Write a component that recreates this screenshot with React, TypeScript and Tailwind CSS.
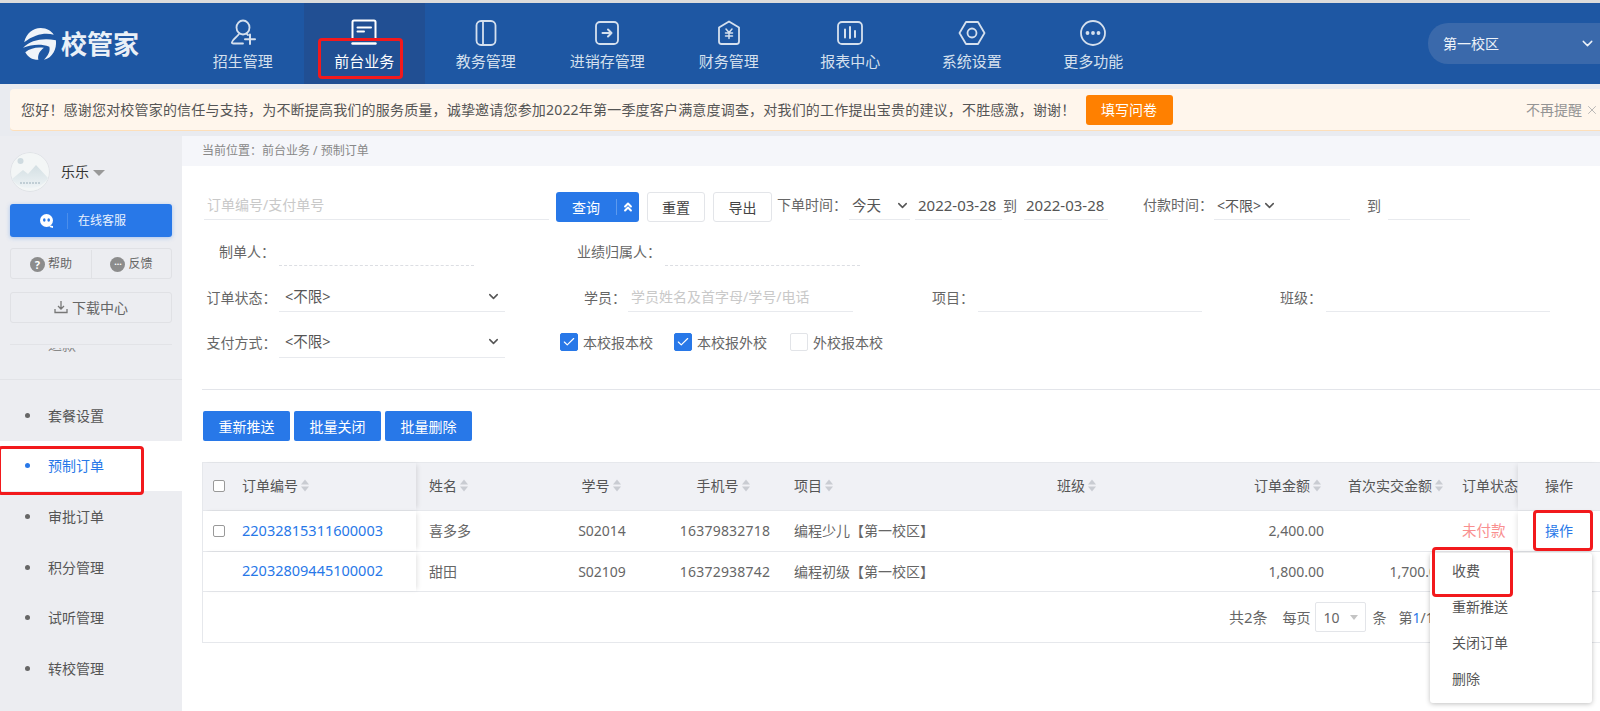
import { ChevronDown, ChevronsUp, Check, X } from "lucide-react"
import type { ReactNode } from "react"

const navItems = [
  { label: "招生管理", icon: "user" },
  { label: "前台业务", icon: "desk", active: true },
  { label: "教务管理", icon: "book" },
  { label: "进销存管理", icon: "stock" },
  { label: "财务管理", icon: "money" },
  { label: "报表中心", icon: "chart" },
  { label: "系统设置", icon: "gear" },
  { label: "更多功能", icon: "more" },
]

const menuItems = ["套餐设置", "预制订单", "审批订单", "积分管理", "试听管理", "转校管理"]

const orders = [
  { no: "22032815311600003", name: "喜多多", sno: "S02014", phone: "16379832718", item: "编程少儿【第一校区】", amount: "2,400.00", first: "", status: "未付款", checkbox: true },
  { no: "22032809445100002", name: "甜田", sno: "S02109", phone: "16372938742", item: "编程初级【第一校区】", amount: "1,800.00", first: "1,700.00", status: "", checkbox: false },
]

function NavIcon({ name }: { name: string }) {
  const common = { width: 28, height: 28, viewBox: "0 0 28 28", fill: "none", stroke: "#d5e0ee", strokeWidth: 1.8, strokeLinecap: "round" as const, strokeLinejoin: "round" as const }
  if (name === "user")
    return (
      <svg {...common}>
        <ellipse cx="14" cy="8.500" rx="6.500" ry="7" />
        <path d="M10 15c-2 3-6 5-7 8-.4 1 .2 1.500 1.500 1.500H14" />
        <path d="M17.500 14.500l1.500 1.500" />
        <path d="M21 15.500v9.500M16 20.200h10" strokeWidth="2" />
      </svg>
    )
  if (name === "desk")
    return (
      <svg {...common} stroke="#ffffff" strokeWidth="2">
        <path d="M2.500 21V3c0-.8.700-1.500 1.500-1.500h20c.8 0 1.500.7 1.500 1.500v18" />
        <path d="M7.500 8.500h13.500M7.500 12.500h6.500" />
        <path d="M2.500 24.500h23" strokeWidth="2.400" />
      </svg>
    )
  if (name === "book")
    return (
      <svg {...common}>
        <rect x="4.500" y="2" width="19" height="24" rx="4.500" />
        <path d="M11 2v24" />
      </svg>
    )
  if (name === "stock")
    return (
      <svg {...common}>
        <rect x="3" y="3" width="22" height="22" rx="4" />
        <path d="M9.500 14h9M15 10.500l3.500 3.500-3.500 3.500" strokeWidth="2" />
      </svg>
    )
  if (name === "money")
    return (
      <svg {...common}>
        <path d="M14 2.500l10 6v14a2.500 2.500 0 0 1-2.500 2.500h-15A2.500 2.500 0 0 1 4 22.500v-14z" />
        <path d="M11 10l3 3.500 3-3.500M10.500 14h7M10.500 17h7M14 13.500v6" strokeWidth="1.500" />
      </svg>
    )
  if (name === "chart")
    return (
      <svg {...common}>
        <rect x="2" y="3" width="24" height="22" rx="4" />
        <path d="M9 10.500v8M14 8v11M19 12v6" strokeWidth="2" />
      </svg>
    )
  if (name === "gear")
    return (
      <svg {...common}>
        <path d="M8 3h12l6.500 11L20 25H8L1.500 14z" />
        <circle cx="14" cy="14" r="4.500" />
      </svg>
    )
  return (
    <svg {...common}>
      <circle cx="14" cy="14" r="12" />
      <circle cx="8.500" cy="14" r="1" fill="#d5e0ee" />
      <circle cx="14" cy="14" r="1" fill="#d5e0ee" />
      <circle cx="19.500" cy="14" r="1" fill="#d5e0ee" />
    </svg>
  )
}

function Logo() {
  return (
    <div className="flex w-[182px] shrink-0 items-center pt-[1px] pl-[22px]">
      <svg width="35" height="35" viewBox="0 0 32 32" fill="#f0f4f9">
        <path d="M2 14C4 6 10 1 17 1c6 0 10 3 12 6C22 5 12 6 2 14z" />
        <path d="M1 19c7-7 17-9 30-7 1 8-3 16-11 18 4-4 6-8 5-12-8-3-16-2-24 1z" />
        <path d="M3 23c5-4 11-5 17-4-4 3-6 7-5 11-6 0-10-3-12-7z" />
      </svg>
      <span className="ml-[4px] text-[26px] leading-none font-bold text-[#eaf0f7]">校管家</span>
    </div>
  )
}

function Header() {
  return (
    <header className="flex h-[81px] shrink-0 bg-[#1e57a3]">
      <Logo />
      <nav className="flex">
        {navItems.map((item) => (
          <div
            key={item.label}
            className={`flex w-[121.5px] flex-col items-center pt-[16px] ${item.active ? "bg-[#214f93]" : ""}`}
          >
            <NavIcon name={item.icon} />
            <span className={`mt-[4px] text-[15px] leading-[20px] whitespace-nowrap ${item.active ? "text-white" : "text-[#d5e0ee]"}`}>
              {item.label}
            </span>
          </div>
        ))}
      </nav>
      <div className="mt-[20px] ml-auto flex h-[41px] w-[172px] items-center justify-between rounded-l-[20px] bg-[#3a69ab] pr-[4px] pl-[15px] text-[14px] text-[#eef3f9]">
        <span>第一校区</span>
        <ChevronDown className="h-[17px] w-[17px]" />
      </div>
    </header>
  )
}

function Notice() {
  return (
    <div className="flex h-[52px] shrink-0 items-start bg-[#e9ebf0] pt-[5px] pl-[10px]">
      <div className="flex h-[42px] w-full items-center rounded-l-[4px] border-b border-[#fddfba] bg-[#fff6ec] pl-[11px] text-[14px] text-[#555]">
        <span className="w-[1064.500px] whitespace-nowrap tracking-[0.19px]">
          您好！感谢您对校管家的信任与支持，为不断提高我们的服务质量，诚挚邀请您参加2022年第一季度客户满意度调查，对我们的工作提出宝贵的建议，不胜感激，谢谢！
        </span>
        <button className="h-[30px] w-[87px] rounded-[3px] bg-[#ff8000] text-[14px] text-white">填写问卷</button>
        <span className="ml-auto text-[#949494]">不再提醒</span>
        <X className="mr-[1px] ml-[3px] h-[14px] w-[14px] text-[#aaa]" strokeWidth={1.4} />
      </div>
    </div>
  )
}

function Avatar() {
  return (
    <svg width="40" height="40" viewBox="0 0 40 40" className="rounded-full">
      <defs>
        <linearGradient id="hill" x1="0" y1="0" x2="0" y2="1">
          <stop offset="0" stopColor="#d3dfe3" />
          <stop offset="1" stopColor="#eef3f5" />
        </linearGradient>
      </defs>
      <circle cx="20" cy="20" r="19.500" fill="#f3f6f6" stroke="#dfe2e6" />
      <circle cx="10.500" cy="9" r="3" fill="#cfdbe0" />
      <path d="M2 27l11-9 5 4 8-9 12 13c-3 6-10 10-18 10S5 33 2 27z" fill="url(#hill)" />
      <path d="M10 31h20" stroke="#b4c4cc" strokeWidth="1.300" strokeDasharray="2 1" />
    </svg>
  )
}

function Sidebar() {
  return (
    <aside className="flex w-[182px] shrink-0 flex-col bg-[#ecedf1] pt-[16px]">
      <div className="flex flex-col px-[10px]">
        <div className="flex h-[39px] items-center">
          <Avatar />
          <span className="ml-[11px] text-[14px] text-[#333]">乐乐</span>
          <span className="mt-[2px] ml-[4px] h-0 w-0 border-x-[6px] border-t-[6px] border-x-transparent border-t-[#999]" />
        </div>
        <div className="mt-[13px] flex h-[33px] items-center rounded-[3px] bg-[#2878e8] text-[12px] text-[#e8f1fd] shadow-[0_1px_4px_rgba(40,120,232,0.35)]">
          <svg width="16" height="16" viewBox="0 0 16 16" className="ml-[29px]">
            <circle cx="7.500" cy="7.500" r="6.500" fill="#fff" />
            <path d="M11 12.500l3 .5v2l-3.500-1z" fill="#fff" />
            <ellipse cx="5.300" cy="7" rx="1.300" ry="1.700" fill="#2878e8" />
            <ellipse cx="9.700" cy="7" rx="1.300" ry="1.700" fill="#2878e8" />
          </svg>
          <span className="ml-[12px] h-[16px] w-px bg-[#4b8eeb]" />
          <span className="ml-[10px]">在线客服</span>
        </div>
        <div className="mt-[11px] flex h-[31px] rounded-[3px] border border-[#e0e1e5] pt-px text-[12px] text-[#666]">
          <div className="flex w-[81px] items-center justify-center gap-[3px] border-r border-[#e0e1e5]">
            <span className="flex h-[15px] w-[15px] items-center justify-center rounded-full bg-[#8c8c8c] text-[11px] leading-none font-bold text-white">?</span>
            帮助
          </div>
          <div className="flex flex-1 items-center justify-center gap-[3px]">
            <span className="flex h-[15px] w-[15px] items-center justify-center rounded-full bg-[#8c8c8c] text-[9px] leading-[8px] font-bold text-white">···</span>
            反馈
          </div>
        </div>
        <div className="mt-[13px] flex h-[31px] items-center justify-center gap-[4px] rounded-[3px] border border-[#e0e1e5] pb-px text-[14px] text-[#666]">
          <svg width="14" height="14" viewBox="0 0 14 14" fill="none" stroke="#777" strokeWidth="1.300">
            <path d="M7 1v8M4 6l3 3 3-3M1 9v3.500h12V9" />
          </svg>
          下载中心
        </div>
        <div className="mt-[21px] h-px bg-[#e2e3e7]" />
        <div className="mt-[3px] flex h-[7px] items-end overflow-hidden pl-[38px] text-[14px] leading-[20px] text-[#888]">退款</div>
      </div>
      <div className="mt-[24px] h-px bg-[#e2e3e7]" />
      <ul className="mt-[10px]">
        {menuItems.map((m) => {
          const on = m === "预制订单"
          return (
            <li key={m} className={`flex h-[50.600px] items-center pl-[25px] text-[14px] ${on ? "bg-white text-[#2878e8]" : "text-[#555]"}`}>
              <span className={`mr-[18px] h-[5px] w-[5px] rounded-full ${on ? "bg-[#2878e8]" : "bg-[#666]"}`} />
              {m}
            </li>
          )
        })}
      </ul>
    </aside>
  )
}

function Label({ className, children }: { className: string; children: ReactNode }) {
  return <span className={`shrink-0 pb-[2px] text-[14px] whitespace-nowrap text-[#666] ${className}`}>{children}</span>
}

function Field({ className, placeholder }: { className: string; placeholder?: string }) {
  return (
    <input
      placeholder={placeholder}
      className={`h-full shrink-0 border-b border-[#e8eaee] bg-transparent px-[3px] pb-[2px] text-[14px] outline-none placeholder:text-[#c9c9c9] ${className}`}
    />
  )
}

function Select({ className, text, chevronClass = "" }: { className: string; text: string; chevronClass?: string }) {
  return (
    <div className={`flex h-full shrink-0 items-center border-b border-[#e8eaee] text-[14.500px] text-[#555] ${className}`}>
      <span className="whitespace-nowrap">{text}</span>
      <ChevronDown className={`h-[15px] w-[15px] text-[#555] ${chevronClass}`} strokeWidth={2.4} />
    </div>
  )
}

function CheckItem({ checked, text, className }: { checked: boolean; text: string; className: string }) {
  return (
    <div className={`flex shrink-0 items-center gap-[5px] pb-[4px] ${className}`}>
      <span className={`flex h-[18px] w-[18px] items-center justify-center rounded-[2px] border ${checked ? "border-[#2878e8] bg-[#2878e8]" : "border-[#e2e4e8] bg-white"}`}>
        {checked && <Check className="h-[14px] w-[14px] text-white" strokeWidth={2} />}
      </span>
      <span className="text-[14px] whitespace-nowrap text-[#666]">{text}</span>
    </div>
  )
}

function Filters() {
  return (
    <div className="flex flex-col pt-[26px]">
      <div className="flex h-[30px] items-center">
        <Field className="ml-[2px] !h-[28px] w-[345px] self-start" placeholder="订单编号/支付单号" />
        <div className="ml-[7px] flex h-full w-[83px] shrink-0 items-center rounded-[3px] bg-[#2878e8] text-[14px] text-white">
          <span className="w-[60px] text-center">查询</span>
          <span className="h-[16px] w-px bg-[#5d9aee]" />
          <ChevronsUp className="ml-[4px] h-[14px] w-[14px]" strokeWidth={3.5} />
        </div>
        <button className="ml-[8px] h-full w-[58px] shrink-0 rounded-[3px] border border-[#e3e5e9] text-[14px] text-[#444]">重置</button>
        <button className="ml-[8px] h-full w-[59px] shrink-0 rounded-[3px] border border-[#e3e5e9] text-[14px] text-[#444]">导出</button>
        <Label className="ml-[5px] w-[67px] self-start leading-[26px]">下单时间：</Label>
        <Select className="ml-[5px] !h-[28px] w-[61px] justify-between self-start pl-[3px]" text="今天" />
        <div className="ml-[5px] flex h-[28px] w-[87px] shrink-0 items-center self-start border-b border-[#e8eaee] pl-[3px] text-[15px] text-[#555]">2022-03-28</div>
        <Label className="ml-[1px] w-[14px] self-start leading-[28px]">到</Label>
        <div className="ml-[7px] flex h-[28px] w-[84px] shrink-0 items-center self-start border-b border-[#e8eaee] pl-[2px] text-[15px] text-[#555]">2022-03-28</div>
        <Label className="ml-[35px] w-[66px] self-start leading-[26px]">付款时间：</Label>
        <Select className="ml-[5px] !h-[28px] w-[136px] self-start pl-[3px] !text-[14px]" text="<不限>" chevronClass="ml-[1px]" />
        <Label className="ml-[17px] w-[14px] self-start leading-[28px]">到</Label>
        <Field className="ml-[7px] !h-[28px] w-[82px] self-start" />
      </div>

      <div className="mt-[16px] flex h-[28px] items-center">
        <Label className="ml-[17px] w-[60px]">制单人：</Label>
        <div className="h-full w-[194.500px] shrink-0 border-b border-dashed border-[#dcdee3]" />
        <Label className="ml-[103.500px] w-[88px]">业绩归属人：</Label>
        <div className="h-full w-[195px] shrink-0 border-b border-dashed border-[#dcdee3]" />
      </div>

      <div className="mt-[18px] flex h-[28px] items-center">
        <Label className="ml-[4.500px] w-[72.500px]">订单状态：</Label>
        <Select className="w-[226px] justify-between pr-[4px] pb-[2px] pl-[6px]" text="<不限>" />
        <Label className="ml-[79px] w-[44px]">学员：</Label>
        <Field className="w-[225px]" placeholder="学员姓名及首字母/学号/电话" />
        <Label className="ml-[79px] w-[46px]">项目：</Label>
        <Field className="w-[224px]" />
        <Label className="ml-[78px] w-[46px]">班级：</Label>
        <Field className="w-[224px]" />
      </div>

      <div className="mt-[18px] flex h-[28px] items-center">
        <Label className="ml-[4.500px] w-[72.500px] !pb-[4px]">支付方式：</Label>
        <Select className="w-[226px] justify-between pr-[4px] pb-[4px] pl-[6px]" text="<不限>" />
        <CheckItem className="ml-[55px] w-[114px]" checked text="本校报本校" />
        <CheckItem className="w-[116px]" checked text="本校报外校" />
        <CheckItem className="" checked={false} text="外校报本校" />
      </div>
    </div>
  )
}

function Sort() {
  return (
    <svg width="8" height="13" viewBox="0 0 8 13" className="ml-[3px] shrink-0">
      <path d="M4 0.500L8 5.500H0z" fill="#c9ccd2" />
      <path d="M4 12.500L8 7.500H0z" fill="#c9ccd2" />
    </svg>
  )
}

function Box({ show = true }: { show?: boolean }) {
  if (!show) return <span className="w-[12px] shrink-0" />
  return <span className="h-[12px] w-[12px] shrink-0 rounded-[2px] border border-[#999] bg-white" />
}

// column widths follow the screenshot: frozen first and last, the rest scroll
const cols = {
  no: "w-[213px] pl-[10px] relative z-10 shadow-[3px_0_5px_-2px_rgba(0,0,0,0.12)]",
  name: "w-[132px] pl-[13px]",
  sno: "w-[110px] justify-center",
  phone: "w-[134px] justify-center",
  item: "w-[253px] pl-[2px]",
  cls: "w-[85px] pl-[12px]",
  amount: "w-[205px] justify-end pr-[10px]",
  first: "w-[120px] justify-end pr-[10px]",
  status: "w-[63px] pl-[7px] overflow-hidden",
  op: "w-[82px] pl-[27px] relative z-10 shadow-[-3px_0_5px_-2px_rgba(0,0,0,0.10)]",
}

function Cell({ className, children }: { className: string; children?: ReactNode }) {
  return <div className={`flex h-full shrink-0 items-center whitespace-nowrap ${className}`}>{children}</div>
}

function OrderTable() {
  return (
    <div className="mt-[21px] h-[181px] border-t border-b border-l border-[#e6e8ec] text-[14px] text-[#666]">
      <div className="flex h-[48px] border-b border-[#e6e8ec] bg-[#f0f1f5] text-[#555]">
        <Cell className={`${cols.no} bg-[#f0f1f5] pb-[2px]`}>
          <Box />
          <span className="ml-[17px]">订单编号</span>
          <Sort />
        </Cell>
        <Cell className={`${cols.name} pb-[2px]`}>姓名<Sort /></Cell>
        <Cell className={`${cols.sno} pr-[4px] pb-[2px]`}>学号<Sort /></Cell>
        <Cell className={`${cols.phone} pr-[4px] pb-[2px]`}>手机号<Sort /></Cell>
        <Cell className={`${cols.item} pb-[2px]`}>项目<Sort /></Cell>
        <Cell className={`${cols.cls} pb-[2px]`}>班级<Sort /></Cell>
        <Cell className={`${cols.amount} !pr-[14px] pb-[2px]`}>订单金额<Sort /></Cell>
        <Cell className={`${cols.first} !pr-[12px] pb-[2px]`}>首次实交金额<Sort /></Cell>
        <Cell className={`${cols.status} pb-[2px]`}>订单状态</Cell>
        <Cell className={`${cols.op} bg-[#f0f1f5] pb-[2px]`}>操作</Cell>
      </div>
      {orders.map((o) => (
        <div key={o.no} className="flex h-[40.500px] border-b border-[#e6e8ec] bg-white">
          <Cell className={`${cols.no} bg-white`}>
            <Box show={o.checkbox} />
            <span className="ml-[17px] text-[14.500px] text-[#2878e8]">{o.no}</span>
          </Cell>
          <Cell className={cols.name}>{o.name}</Cell>
          <Cell className={`${cols.sno} pr-[2px]`}>{o.sno}</Cell>
          <Cell className={`${cols.phone} tracking-[0.2px]`}>{o.phone}</Cell>
          <Cell className={cols.item}>{o.item}</Cell>
          <Cell className={cols.cls} />
          <Cell className={`${cols.amount} !pr-[11px]`}>{o.amount}</Cell>
          <Cell className={cols.first}>{o.first}</Cell>
          <Cell className={`${cols.status} text-[14.500px] text-[#f98f8f]`}>{o.status}</Cell>
          <Cell className={`${cols.op} bg-white text-[#2878e8]`}>{o.checkbox ? "操作" : ""}</Cell>
        </div>
      ))}
      <div className="flex h-[50px] items-center pl-[1026px]">
        <span className="text-[15px] whitespace-nowrap">共2条</span>
        <span className="ml-[15px] whitespace-nowrap">每页</span>
        <div className="ml-[4px] flex h-[30px] w-[51px] shrink-0 items-center rounded-[2px] border border-[#e3e5e9] pl-[8px]">
          10
          <span className="ml-[10px] h-0 w-0 border-x-[4px] border-t-[5px] border-x-transparent border-t-[#c4c4c4]" />
        </div>
        <span className="ml-[7px]">条</span>
        <span className="ml-[12px] whitespace-nowrap">第<span className="text-[#2878e8]">1</span>/1页</span>
      </div>
    </div>
  )
}

function ActionMenu() {
  return (
    <div className="absolute top-[553px] left-[1430px] z-20 h-[150px] w-[162px] rounded-[3px] bg-white shadow-[0_1px_5px_rgba(0,0,0,0.25)]">
      {["收费", "重新推送", "关闭订单", "删除"].map((t) => (
        <div key={t} className="flex h-[36px] items-center pb-[2px] pl-[22px] text-[14px] text-[#555]">{t}</div>
      ))}
    </div>
  )
}

function Mark({ className }: { className: string }) {
  return <div className={`absolute z-30 rounded-[4px] border-[3px] border-[#f2191c] ${className}`} />
}

export default function App() {
  return (
    <div className="relative flex h-[711px] w-[1600px] flex-col overflow-hidden bg-white font-['Noto_Sans','Noto_Sans_CJK_SC',sans-serif]">
      <div className="h-[3px] shrink-0 bg-[#dcdcdc]" />
      <Header />
      <Notice />
      <div className="flex min-h-0 flex-1">
        <Sidebar />
        <main className="min-w-0 flex-1">
          <div className="flex h-[30px] items-center bg-[#f5f6fa] pl-[20px] text-[12px] text-[#888]">当前位置：前台业务 / 预制订单</div>
          <div className="pl-[20px]">
            <Filters />
            <div className="mt-[31px] h-px bg-[#e3e5ea]" />
            <div className="mt-[21px] ml-[1px] flex gap-[4px]">
              {["重新推送", "批量关闭", "批量删除"].map((b) => (
                <button key={b} className="h-[30px] w-[87px] rounded-[2px] bg-[#2878e8] text-[14px] text-white">{b}</button>
              ))}
            </div>
            <OrderTable />
          </div>
        </main>
      </div>
      <ActionMenu />
      <Mark className="top-[38px] left-[318px] h-[41px] w-[85px]" />
      <Mark className="top-[446px] left-[-2px] h-[49px] w-[146px]" />
      <Mark className="top-[510px] left-[1533px] h-[41px] w-[60px]" />
      <Mark className="top-[547px] left-[1432px] h-[50px] w-[81px]" />
    </div>
  )
}
